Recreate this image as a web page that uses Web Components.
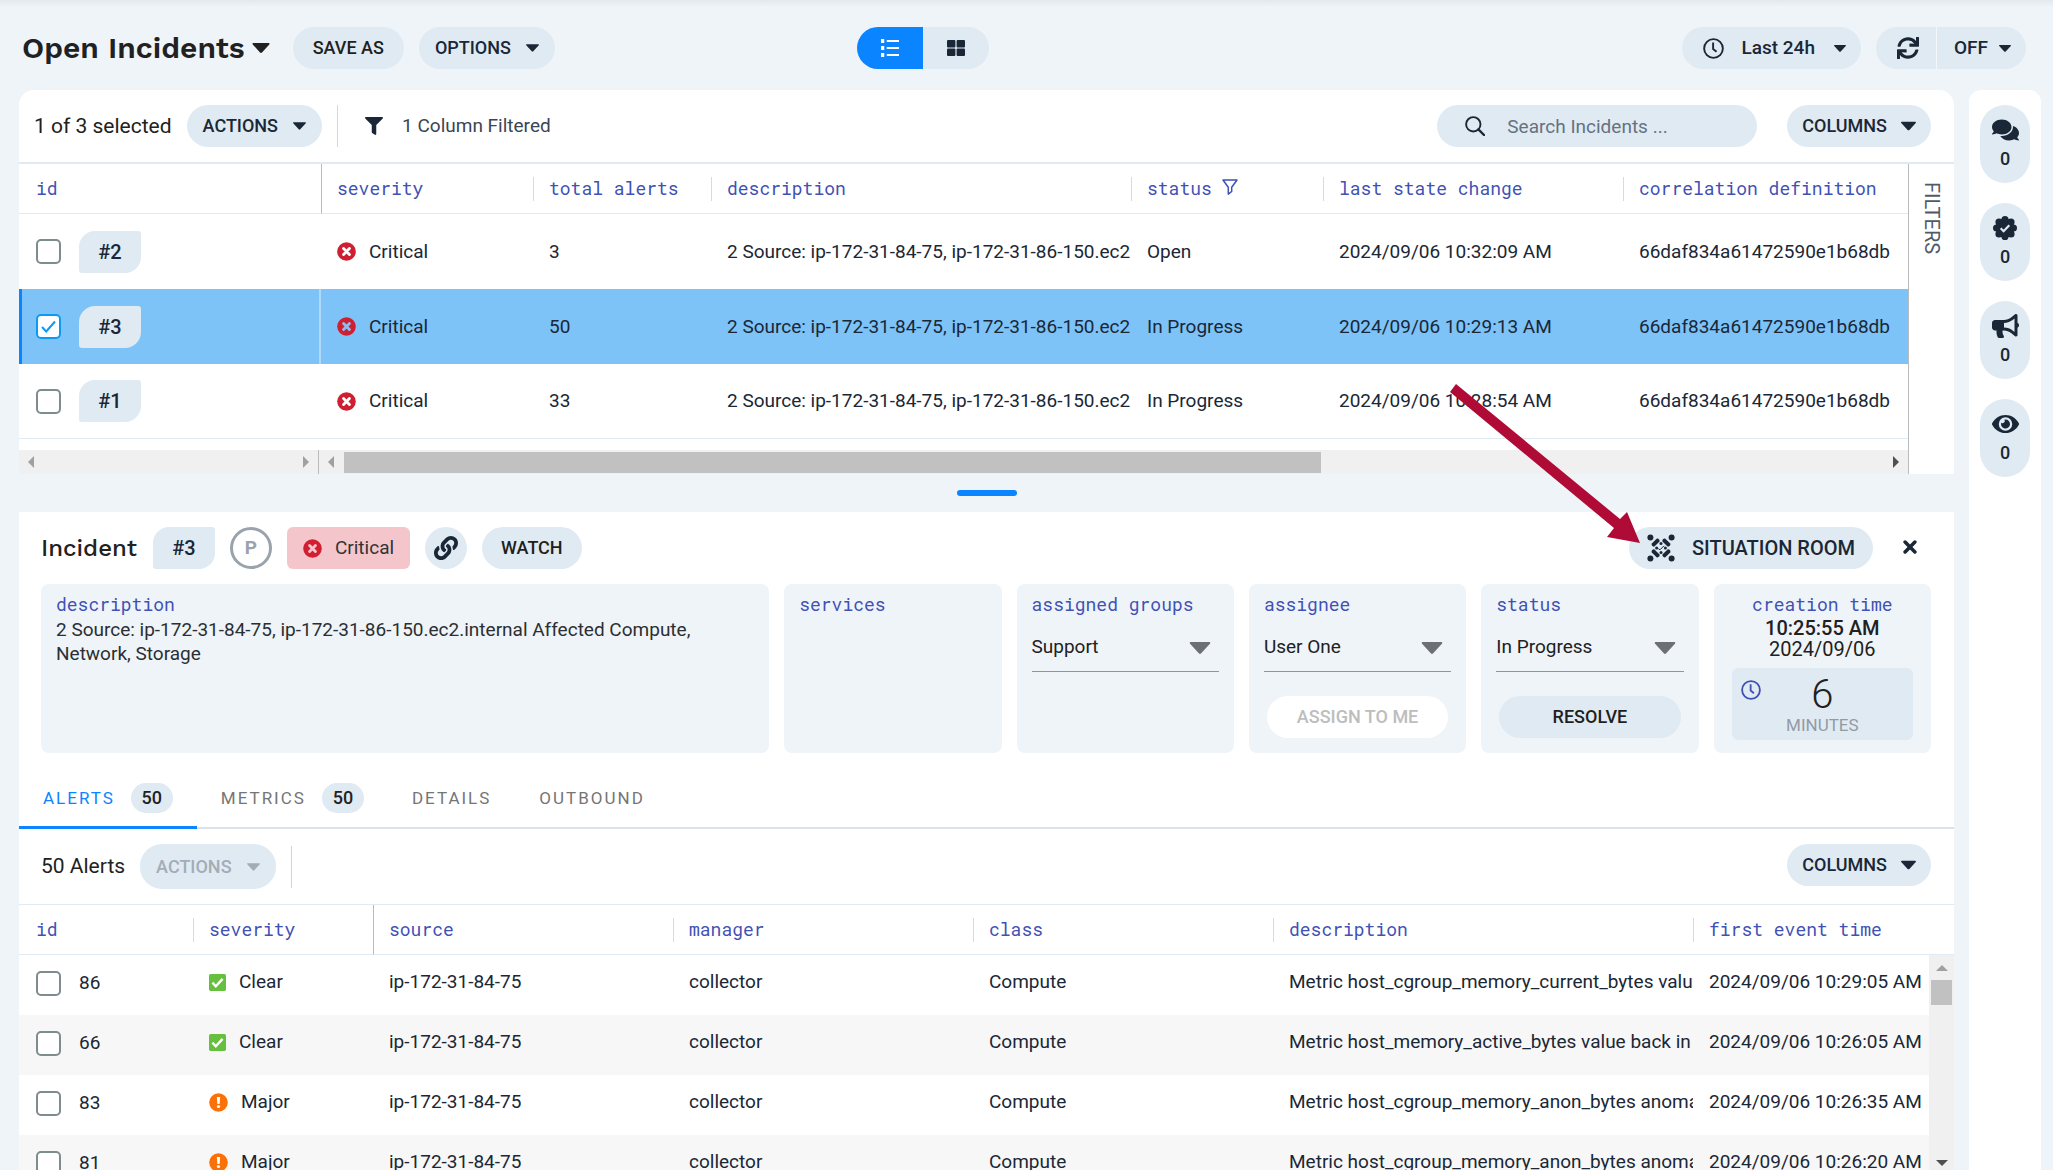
<!DOCTYPE html>
<html lang="en">
<head>
<meta charset="utf-8">
<title>Open Incidents</title>
<style>
  html, body { margin: 0; height: 100%; }
  body {
    --bg: #eff4f8; --pill: #e0eaf3; --ink: #1a2736; --text: #212121; --link: #3f51b5;
    --blue: #0a84ff; --line: #e0eaf3; --mono: "Roboto Mono", "Liberation Mono", monospace;
    --display: "Work Sans", Inter, sans-serif;
    background: var(--bg); color: var(--text); overflow: hidden;
    font: 400 19px/24px Roboto, sans-serif;
  }
</style>
</head>
<body>
<incident-app></incident-app>
<script>
const base = `*{box-sizing:border-box} button{font:inherit;color:inherit;border:0;background:none;padding:0;margin:0;cursor:pointer}`;
function define(name, css, html, ready) {
  customElements.define(name, class extends HTMLElement {
    connectedCallback() {
      if (this.shadowRoot) return;
      const root = this.attachShadow({ mode: "open" });
      root.innerHTML = `<style>${base}${css}</style>${typeof html === "function" ? html(this) : html}`;
      if (ready) ready(this, root);
    }
  });
}

const glyphs = {
  caret: ["0 0 12 7", '<path d="M.6 0h10.8c.5 0 .8.6.4 1L6.7 6.6a1 1 0 0 1-1.4 0L.2 1C-.2.6.1 0 .6 0z"/>'],
  filter: ["0 0 512 512", '<path d="M487.976 0H24.028C2.71 0-8.047 25.866 7.058 40.971L192 225.941V432c0 7.831 3.821 15.17 10.237 19.662l80 55.98C298.02 518.69 320 507.493 320 487.98V225.941l184.947-184.97C520.021 25.896 509.338 0 487.976 0z"/>'],
  funnel: ["0 0 16 16", '<path d="M1 1h14L9.700 8.200v4.300l-3.400 2.600V8.200z" fill="none" stroke="currentColor" stroke-width="1.500" stroke-linejoin="round"/>'],
  list: ["0 0 22 22", '<path d="M0 0h4v5H0zM0 8.500h4v5H0zM0 17h4v5H0zM7 1.200h15v2.400H7zM7 9.800h15v2.400H7zM7 18.300h15v2.400H7z"/>'],
  tiles: ["0 0 18 16", '<rect width="8.400" height="7.400" rx="1"/><rect x="9.600" width="8.400" height="7.400" rx="1"/><rect y="8.600" width="8.400" height="7.400" rx="1"/><rect x="9.600" y="8.600" width="8.400" height="7.400" rx="1"/>'],
  clock: ["0 0 22 22", '<circle cx="11" cy="11" r="9.800" fill="none" stroke="currentColor" stroke-width="2"/><path d="M10.600 4.800v6.700l3.600 3" fill="none" stroke="currentColor" stroke-width="2"/>'],
  search: ["0 0 20 20", '<circle cx="8.300" cy="8.300" r="7.200" fill="none" stroke="currentColor" stroke-width="1.900"/><path d="M13.400 13.400L19 19" fill="none" stroke="currentColor" stroke-width="2.400" stroke-linecap="round"/>'],
  sync: ["0 0 512 512", '<path d="M440.65 12.57l4 82.77A247.16 247.16 0 0 0 255.83 8C134.73 8 33.91 94.92 12.29 209.82A12 12 0 0 0 24.09 224h49.05a12 12 0 0 0 11.67-9.26 175.91 175.91 0 0 1 317-56.94l-101.46-4.86a12 12 0 0 0-12.57 12v47.41a12 12 0 0 0 12 12H500a12 12 0 0 0 12-12V12a12 12 0 0 0-12-12h-47.37a12 12 0 0 0-11.98 12.57zM255.83 432a175.61 175.61 0 0 1-146-77.8l101.8 4.87a12 12 0 0 0 12.57-12v-47.4a12 12 0 0 0-12-12H12a12 12 0 0 0-12 12V500a12 12 0 0 0 12 12h47.35a12 12 0 0 0 12-12.6l-4.15-82.57A247.17 247.17 0 0 0 255.83 504c121.11 0 221.93-86.92 243.55-201.82a12 12 0 0 0-11.8-14.18h-49.05a12 12 0 0 0-11.67 9.26A175.86 175.86 0 0 1 255.83 432z"/>'],
  comments: ["0 32 576 448", '<path d="M416 192c0-88.4-93.1-160-208-160S0 103.6 0 192c0 34.3 14.1 65.9 38 92-13.4 30.2-35.5 54.2-35.8 54.5-2.2 2.3-2.8 5.7-1.5 8.7S4.800 352 8 352c36.600 0 66.900-12.300 88.700-25 32.200 15.700 70.300 25 111.300 25 114.900 0 208-71.600 208-160zm122 220c23.900-26 38-57.700 38-92 0-66.900-53.500-124.200-129.300-148.100.9 6.600 1.300 13.300 1.300 20.100 0 105.900-107.700 192-240 192-10.800 0-21.300-.8-31.700-1.900C207.800 439.600 281.800 480 368 480c41 0 79.100-9.200 111.300-25 21.800 12.700 52.100 25 88.700 25 3.200 0 6.100-1.900 7.300-4.800 1.300-2.900.7-6.300-1.500-8.700-.3-.2-22.400-24.200-35.800-54.500z"/>'],
  badge: ["0 0 24 24", '<circle cx="12" cy="12" r="9.500"/><circle cx="12" cy="3.600" r="3.600"/><circle cx="12" cy="20.400" r="3.600"/><circle cx="3.600" cy="12" r="3.600"/><circle cx="20.400" cy="12" r="3.600"/><circle cx="6" cy="6" r="3.600"/><circle cx="18" cy="6" r="3.600"/><circle cx="6" cy="18" r="3.600"/><circle cx="18" cy="18" r="3.600"/><path d="M7.700 12.200l2.900 3 5.700-6" fill="none" stroke="#e0eaf3" stroke-width="2.200"/>'],
  horn: ["0 0 576 512", '<path d="M576 240c0-23.630-12.950-44.040-32-55.120V32.010C544 23.260 537.020 0 512 0c-7.120 0-14.190 2.380-19.980 7.020l-85.030 68.030C364.280 109.190 310.660 128 256 128H64c-35.350 0-64 28.650-64 64v96c0 35.350 28.650 64 64 64h33.700c-1.390 10.480-2.180 21.140-2.180 32 0 39.770 9.260 77.350 25.560 110.940 5.190 10.690 16.520 17.060 28.400 17.060h74.280c26.050 0 41.690-29.840 25.900-50.560-16.400-21.520-26.150-48.360-26.150-77.440 0-11.110 1.620-21.790 4.410-32H256c54.660 0 108.280 18.810 150.980 52.950l85.030 68.030a32.023 32.023 0 0 0 19.980 7.020c24.920 0 32-22.780 32-32V295.130C563.050 284.040 576 263.630 576 240zm-96 141.420l-33.050-26.440C392.950 311.780 325.120 288 256 288v-96c69.120 0 136.950-23.780 190.950-66.980L480 98.580v282.840z"/>'],
  eye: ["0 64 576 384", '<path d="M572.520 241.400C518.290 135.590 410.930 64 288 64S57.680 135.640 3.480 241.410a32.350 32.350 0 0 0 0 29.190C57.710 376.410 165.070 448 288 448s230.320-71.640 284.520-177.410a32.350 32.350 0 0 0 0-29.190zM288 400a144 144 0 1 1 144-144 143.930 143.930 0 0 1-144 144zm0-240a95.310 95.310 0 0 0-25.310 3.790 47.850 47.850 0 0 1-66.900 66.900A95.780 95.780 0 1 0 288 160z"/>'],
  link: ["0 0 512 512", '<path d="M326.612 185.391c59.747 59.809 58.927 155.698.36 214.590-.11.12-.24.25-.36.37l-67.200 67.200c-59.270 59.270-155.699 59.262-214.960 0-59.270-59.260-59.270-155.700 0-214.960l37.106-37.106c9.840-9.840 26.786-3.300 27.294 10.606.648 17.722 3.826 35.527 9.690 52.721 1.986 5.822.567 12.262-3.783 16.612l-13.087 13.087c-28.026 28.026-28.905 73.660-1.155 101.960 28.024 28.579 74.086 28.749 102.325.51l67.200-67.190c28.191-28.191 28.073-73.757 0-101.830-3.701-3.694-7.429-6.564-10.341-8.569a16.037 16.037 0 0 1-6.947-12.606c-.396-10.567 3.348-21.456 11.698-29.806l21.054-21.055c5.521-5.521 14.182-6.199 20.584-1.731a152.482 152.482 0 0 1 20.522 17.197zM467.547 44.449c-59.261-59.262-155.690-59.270-214.960 0l-67.200 67.200c-.12.12-.25.25-.36.37-58.566 58.892-59.387 154.781.36 214.590a152.454 152.454 0 0 0 20.521 17.196c6.402 4.468 15.064 3.789 20.584-1.731l21.054-21.055c8.350-8.350 12.094-19.239 11.698-29.806a16.037 16.037 0 0 0-6.947-12.606c-2.912-2.005-6.640-4.875-10.341-8.569-28.073-28.073-28.191-73.639 0-101.830l67.200-67.190c28.239-28.239 74.300-28.069 102.325.51 27.750 28.300 26.872 73.934-1.155 101.960l-13.087 13.087c-4.350 4.350-5.769 10.790-3.783 16.612 5.864 17.194 9.042 34.999 9.690 52.721.509 13.906 17.454 20.446 27.294 10.606l37.106-37.106c59.271-59.259 59.271-155.699.001-214.959z"/>'],
  room: ["0 0 28 28", '<g id="q"><circle cx="3.400" cy="3.400" r="3"/><path d="M4.800 9.600l4.800-4.800c1.500-.9 3.300.9 3 2.600L7.400 12.600c-1.700.5-3.500-1.500-2.600-3z"/><circle cx="14" cy="9.600" r="1.500"/></g><use href="#q" transform="rotate(90 14 14)"/><use href="#q" transform="rotate(180 14 14)"/><use href="#q" transform="rotate(270 14 14)"/><path d="M11.300 14.600l1.700 1.200 4-4" fill="none" stroke="currentColor" stroke-width="1"/>'],
  close: ["0 0 12 12", '<path d="M1.800 1.800l8.400 8.400M10.200 1.800l-8.400 8.400" fill="none" stroke="currentColor" stroke-width="3" stroke-linecap="round"/>'],
  critical: ["0 0 20 20", '<circle cx="10" cy="10" r="9.800" fill="#cf1f30"/><path d="M6.900 6.900l6.200 6.200M13.100 6.900l-6.200 6.200" stroke="var(--cut,#fff)" stroke-width="3" stroke-linecap="round"/>'],
  clear: ["0 0 20 20", '<rect width="20" height="20" rx="2" fill="#67bf3e"/><path d="M4 10.200l4 4.200 8-8.600" fill="none" stroke="#fff" stroke-width="2.800"/>'],
  major: ["0 0 20 20", '<circle cx="10" cy="10" r="9.800" fill="#fb7109"/><path d="M8.300 4.300h3.400l-.5 7.200H8.800z" fill="#fff"/><circle cx="10" cy="14.200" r="1.700" fill="#fff"/>'],
  left: ["0 0 6 12", '<path d="M6 0v12L0 6z"/>'], right: ["0 0 6 12", '<path d="M0 0v12l6-6z"/>'],
  up: ["0 0 12 6", '<path d="M0 6h12L6 0z"/>'], down: ["0 0 12 6", '<path d="M0 0h12L6 6z"/>']
};
define("app-icon", `:host{display:inline-flex;flex:none} svg{display:block;fill:currentColor}`, el => {
  const [box, body] = glyphs[el.getAttribute("name")];
  return `<svg viewBox="${box}" width="${el.getAttribute("w")}" height="${el.getAttribute("h") || el.getAttribute("w")}" aria-hidden="true">${body}</svg>`;
});

/* Rounded action button; the caret attribute adds a drop-down mark. */
define("pill-button", `
  :host{display:inline-flex;flex:none}
  button{display:flex;align-items:center;justify-content:center;height:42px;width:100%;border-radius:21px;background:var(--pill-bg,var(--pill));color:var(--pill-ink,var(--ink));padding:0 var(--pad,16px);font-size:18px;font-weight:500;white-space:nowrap}
  :host([tall]) button{height:45px;border-radius:22px}
  :host([round]) button{width:42px;padding:0}
  app-icon.c{margin-left:15px}
  :host([caret="15"]) app-icon.c{margin-left:14px}
  button:disabled{cursor:default}`,
  el => `<button ${el.hasAttribute("off") ? "disabled" : ""} ${el.hasAttribute("label") ? `aria-label="${el.getAttribute("label")}"` : ""}><slot></slot>${el.hasAttribute("caret") ? `<app-icon class="c" name="caret" w="${el.getAttribute("caret") || 13}" h="${el.getAttribute("caret") ? 10 : 8}"></app-icon>` : ""}</button>`);

define("id-tag", `
  :host{display:inline-flex;flex:none;align-items:center;justify-content:center;width:62px;height:42px;background:var(--pill);color:var(--ink);border-radius:16px 3px 16px 3px;font-size:20px;font-weight:500}`,
  `<slot></slot>`);

define("severity-label", `
  :host{display:inline-flex;align-items:center;gap:13px;vertical-align:middle}`,
  el => { const s = el.getAttribute("level"); return `<app-icon name="${s}" w="${s === "clear" ? 17 : 19}"></app-icon><slot></slot>`; });

/* Table of incidents or alerts, filled from the data registered under its "source" name. */
const clip = "2 Source: ip-172-31-84-75, ip-172-31-86-150.ec2";
const hash = "66daf834a61472590e1b68db";
const sources = {
  incidents: {
    cols: [["id", 302], ["severity", 212], ["total alerts", 178], ["description", 420], ["status", 192, "funnel"], ["last state change", 300], ["correlation definition", 0]],
    pin: 1,
    rows: [
      ["#2", "critical", "3", clip, "Open", "2024/09/06 10:32:09 AM", hash],
      ["#3", "critical", "50", clip, "In Progress", "2024/09/06 10:29:13 AM", hash],
      ["#1", "critical", "33", clip, "In Progress", "2024/09/06 10:28:54 AM", hash]]
  },
  alerts: {
    cols: [["id", 174], ["severity", 180], ["source", 300], ["manager", 300], ["class", 300], ["description", 420], ["first event time", 0]],
    pin: 2,
    rows: [
      ["86", "clear", "ip-172-31-84-75", "collector", "Compute", "Metric host_cgroup_memory_current_bytes value", "2024/09/06 10:29:05 AM"],
      ["66", "clear", "ip-172-31-84-75", "collector", "Compute", "Metric host_memory_active_bytes value back in", "2024/09/06 10:26:05 AM"],
      ["83", "major", "ip-172-31-84-75", "collector", "Compute", "Metric host_cgroup_memory_anon_bytes anomaly", "2024/09/06 10:26:35 AM"],
      ["81", "major", "ip-172-31-84-75", "collector", "Compute", "Metric host_cgroup_memory_anon_bytes anomaly", "2024/09/06 10:26:20 AM"]]
  }
};
const cap = s => s[0].toUpperCase() + s.slice(1);
define("data-grid", `
  :host{display:block}
  table{width:100%;table-layout:fixed;border-collapse:separate;border-spacing:0;color:var(--ink)}
  th,td{padding:0 0 0 16px;text-align:left;white-space:nowrap;overflow:hidden}
  th{height:50px;padding-bottom:2px;font:400 18px/24px var(--mono);color:var(--link);border-bottom:1px solid var(--line);background:linear-gradient(#d5dbe0,#d5dbe0) no-repeat 0 50%/1px 24px}
  th:first-child{background:none} th:first-child,td:first-child{padding-left:17px}
  th.pin{border-left:1px solid #b9bcbf;background:none;padding-left:15px}
  th app-icon{margin-left:10px}
  .first{display:flex;align-items:center;gap:18px}
  input{appearance:none;flex:none;width:25px;height:25px;margin:0;border:2px solid #7f8c8d;border-radius:5px;background:#fff}
  input:checked{border-color:#0a9bf5;background:#fff url('data:image/svg+xml,<svg xmlns="http://www.w3.org/2000/svg" viewBox="0 0 21 21"><path d="M4 11l4.200 4.500L17 5.500" fill="none" stroke="%230a9bf5" stroke-width="2"/></svg>') center/21px}
  .incidents td{height:75px}
  .incidents tr:last-child td{border-bottom:1px solid var(--line)}
  .incidents tr.on td{background:#7dc3f8;--cut:#7dc3f8}
  .incidents tr.on td:first-child{border-left:3px solid var(--blue);padding-left:14px;border-right:2px solid #b0d8fa}
  .alerts td{height:60px;padding-bottom:6px}
  .alerts .first{padding-top:2px}
  .alerts tr:nth-child(even) td{background:#f7f7f7}`,
  el => {
    const name = el.getAttribute("source"), d = sources[name];
    const cell = (v, i) => {
      if (i === 0) return name === "incidents" ? `<id-tag>${v}</id-tag>` : `<span>${v}</span>`;
      if (i === 1) return `<severity-label level="${v}">${cap(v)}</severity-label>`;
      return v;
    };
    return `<table class="${name}"><colgroup>${d.cols.map(c => `<col${c[1] ? ` style="width:${c[1]}px"` : ""}>`).join("")}</colgroup>
      <thead><tr>${d.cols.map((c, i) => `<th scope="col" class="${i === d.pin ? "pin" : ""}">${c[0]}${c[2] ? `<app-icon name="${c[2]}" w="16"></app-icon>` : ""}</th>`).join("")}</tr></thead>
      <tbody>${d.rows.map(r => `<tr class="${r[0] === "#3" ? "on" : ""}">${r.map((v, i) => `<td>${i ? cell(v, i) : `<div class="first"><input type="checkbox" aria-label="Select ${v}" ${v === "#3" ? "checked" : ""}>${cell(v, 0)}</div>`}</td>`).join("")}</tr>`).join("")}</tbody></table>`;
  });

define("h-scroll", `
  :host{display:flex;height:24px;margin-top:11px;background:#f0f0f0;color:#a0a0a0}
  .a{flex:none;width:300px;display:flex;align-items:center;justify-content:space-between;padding:0 9px;border-right:1px solid #b9bcbf}
  .b{flex:1;display:flex;align-items:center;padding:0 9px;gap:10px}
  .t{flex:1;height:21px;display:flex} .t i{width:63.5%;background:#c1c1c1}
  .e{color:#505050}`,
  `<div class="a"><app-icon name="left" w="6" h="12"></app-icon><app-icon name="right" w="6" h="12"></app-icon></div>
   <div class="b"><app-icon name="left" w="6" h="12"></app-icon><div class="t"><i></i></div><app-icon class="e" name="right" w="6" h="12"></app-icon></div>`);

define("v-scroll", `
  :host{display:flex;flex-direction:column;align-items:center;justify-content:space-between;width:25px;background:#f0f0f0;color:#a0a0a0;padding:10px 0 4px}
  div{display:flex;flex-direction:column;align-items:center;gap:9px} i{width:21px;height:25px;background:#c1c1c1} .e{color:#505050}`,
  `<div><app-icon name="up" w="12" h="6"></app-icon><i></i></div><app-icon class="e" name="down" w="12" h="6"></app-icon>`);

define("top-bar", `
  :host{display:flex;align-items:center;height:90px;padding:6px 27px 0 22px;background:linear-gradient(#e3e8ec,var(--bg) 7px)}
  .side{flex:1;display:flex;align-items:center;gap:15px} .end{justify-content:flex-end}
  h1{margin:0 8px 0 0;font:600 30px/36px var(--display)}
  h1 button{display:flex;align-items:center;gap:7px}
  .view{display:flex;height:42px;border-radius:21px;overflow:hidden;background:var(--pill);color:var(--ink);margin-right:202px}
  .view button{width:66px;display:flex;align-items:center;justify-content:center}
  .view .on{background:var(--blue);color:#fff}
  .group{display:flex;align-items:center;height:42px;border-radius:21px;background:var(--pill);color:var(--ink);font-size:19px;font-weight:500}
  .group button{display:flex;align-items:center;height:42px}
  .time{gap:17px;padding:0 15px 0 21px} .time app-icon:last-child{margin-left:2px}
  .sync{padding:0 17px 0 21px;border-right:1px solid #f5f8fb} .off{padding:0 15px 0 17px;gap:11px}
  .dark{--ink:#1f1f1f}`,
  `<div class="side"><h1><button>Open Incidents<app-icon name="caret" w="18" h="10"></app-icon></button></h1>
     <pill-button class="dark" style="--pad:20px">SAVE AS</pill-button><pill-button caret>OPTIONS</pill-button></div>
   <div class="view"><button class="on" aria-label="List view"><app-icon name="list" w="22" h="18"></app-icon></button><button aria-label="Tile view"><app-icon name="tiles" w="18" h="16"></app-icon></button></div>
   <div class="side end"><div class="group"><button class="time"><app-icon name="clock" w="21"></app-icon>Last 24h<app-icon name="caret" w="12" h="7"></app-icon></button></div>
     <div class="group"><button class="sync" aria-label="Refresh"><app-icon name="sync" w="22"></app-icon></button><button class="off">OFF<app-icon name="caret" w="12" h="7"></app-icon></button></div></div>`);

define("incidents-panel", `
  :host{display:block;background:#fff;border-radius:15px 15px 0 0}
  .bar{display:flex;align-items:center;height:74px;border-bottom:2px solid var(--line);padding:0 23px 0 15px}
  .bar>span{margin-right:15px;font-size:21px}
  .note{display:flex;align-items:center;gap:19px;height:42px;margin-left:15px;padding-left:27px;border-left:1px solid #d0d9e1;color:#3a4656}
  .note app-icon{color:var(--ink)}
  .search{display:flex;align-items:center;gap:22px;margin:0 30px 0 auto;width:320px;height:42px;border-radius:21px;background:var(--pill);padding:0 28px;color:var(--ink)}
  .search input{flex:1;min-width:0;border:0;outline:0;background:none;font:inherit;padding:2px 0 0;color:inherit}
  .search input::placeholder{color:#667280;opacity:1}
  .body{display:flex}.main{flex:1;min-width:0}
  .filters{flex:none;width:46px;border-left:1px solid #b9bcbf;display:flex;justify-content:center;align-items:flex-start;padding-top:18px;color:#4f5b6b}
  .filters button{writing-mode:vertical-rl;font-size:20px}`,
  `<div class="bar"><span>1 of 3 selected</span><pill-button caret>ACTIONS</pill-button>
     <div class="note"><app-icon name="filter" w="18"></app-icon>1 Column Filtered</div>
     <label class="search"><app-icon name="search" w="20"></app-icon><input type="text" placeholder="Search Incidents ..." aria-label="Search Incidents"></label>
     <pill-button caret="15" style="--pad:15px">COLUMNS</pill-button></div>
   <div class="body"><div class="main"><data-grid source="incidents"></data-grid><h-scroll></h-scroll></div><div class="filters"><button>FILTERS</button></div></div>`);

define("detail-card", `
  :host{display:flex;flex-direction:column;height:169px;border-radius:8px;background:var(--bg);padding:8px 15px 0}
  .l{font:400 18px/24px var(--mono);color:var(--link)}
  :host([center]) .l{text-align:center}`,
  el => `<div class="l">${el.getAttribute("label")}</div><slot></slot>`);

define("line-select", `
  :host{display:block}
  label{display:flex;align-items:center;height:50px;margin-top:6px;border-bottom:1px solid #8f979d;position:relative}
  select{appearance:none;width:100%;border:0;background:none;font:inherit;font-size:19px;color:var(--text);padding:0 36px 0 0;outline:0}
  app-icon{position:absolute;right:8px;top:20px;color:#6c7072;pointer-events:none}`,
  el => `<label><select aria-label="${el.getAttribute("label")}"><option>${el.getAttribute("value")}</option></select><app-icon name="caret" w="22" h="12"></app-icon></label>`);

define("incident-detail", `
  :host{display:flex;flex-direction:column;min-height:0;background:#fff}
  header{display:flex;align-items:center;gap:15px;height:72px;padding:0 37px 0 22px}
  h2{margin:0 1px 0 0;font:500 24px/30px var(--display)}
  .p{width:42px;height:42px;border:3px solid #9aa3ac;border-radius:50%;display:flex;align-items:center;justify-content:center;color:#9aa3ac;font-weight:700}
  .sev{height:42px;padding:0 16px;border-radius:6px;background:#f4c6cb;display:flex;align-items:center;--cut:#f4c6cb;color:#333}
  .room{margin-left:auto;--pad:18px} .room app-icon{margin-right:17px} .big{font-size:20px}
  .x{margin-left:15px;color:var(--ink)}
  .cards{display:grid;grid-template-columns:67fr repeat(5,20fr);gap:15px;padding:0 23px 0 22px}
  p{margin:2px 0 0;color:#2b2f33}
  .act{margin:24px 3px 0}
  .when{display:flex;flex-direction:column;text-align:center;font-size:20px;line-height:21px;padding-top:2px}
  .when b{font-weight:500}
  .age{position:relative;margin:8px 3px 0;height:72px;border-radius:6px;background:var(--pill);display:flex;flex-direction:column}
  .age app-icon{position:absolute;left:9px;top:12px;color:var(--link)}
  .age strong{font:300 40px/54px Roboto,sans-serif} .age small{margin-top:-3px;font-size:17px;line-height:12px;color:#929ba4}
  nav{display:flex;height:76px;border-bottom:2px solid #d9e2ea}
  nav button{display:flex;align-items:center;gap:16px;height:76px;padding:16px 24px 0;font-size:17px;letter-spacing:2px;color:#757575;border-bottom:3px solid transparent}
  nav .on{color:var(--blue);border-color:var(--blue)}
  nav span{display:flex;align-items:center;justify-content:center;width:42px;height:30px;border-radius:15px;background:var(--pill);color:#222;font-size:18px;letter-spacing:normal;font-weight:500}
  .bar{display:flex;align-items:flex-start;height:76px;flex:none;border-bottom:1px solid var(--line);padding:15px 23px 0 22px}
  .bar>span{margin-right:15px;font-size:21px;line-height:45px} .bar i{width:1px;height:42px;margin:2px 0 0 15px;background:#ccd6df}
  .bar .end{margin-left:auto}
  .list{flex:1;min-height:0;display:grid;grid-template:50px 1fr/1fr 25px;overflow:hidden}
  data-grid{grid-area:1/1/3/2} .list hr{grid-area:1/2;margin:0;border:0;border-bottom:1px solid var(--line)} v-scroll{grid-area:2/2}
  .dark{--ink:#1f1f1f} .faded{--pill-ink:#a3adb7}`,
  `<header><h2>Incident</h2><id-tag>#3</id-tag><div class="p">P</div><div class="sev"><severity-label level="critical">Critical</severity-label></div>
     <pill-button round label="Copy link"><app-icon name="link" w="24"></app-icon></pill-button><pill-button class="dark" style="--pad:19px">WATCH</pill-button>
     <pill-button class="room"><app-icon name="room" w="28"></app-icon><span class="big">SITUATION ROOM</span></pill-button>
     <button class="x" aria-label="Close"><app-icon name="close" w="14"></app-icon></button></header>
   <div class="cards">
     <detail-card label="description"><p>2 Source: ip-172-31-84-75, ip-172-31-86-150.ec2.internal Affected Compute, Network, Storage</p></detail-card>
     <detail-card label="services"></detail-card>
     <detail-card label="assigned groups"><line-select label="assigned groups" value="Support"></line-select></detail-card>
     <detail-card label="assignee"><line-select label="assignee" value="User One"></line-select><pill-button class="act" off style="--pill-bg:#fff;--pill-ink:#bdbdbd">ASSIGN TO ME</pill-button></detail-card>
     <detail-card label="status"><line-select label="status" value="In Progress"></line-select><pill-button class="act dark">RESOLVE</pill-button></detail-card>
     <detail-card label="creation time" center><div class="when"><b>10:25:55 AM</b><span>2024/09/06</span><div class="age"><app-icon name="clock" w="20"></app-icon><strong>6</strong><small>MINUTES</small></div></div></detail-card>
   </div>
   <nav role="tablist"><button class="on" role="tab">ALERTS<span>50</span></button><button role="tab">METRICS<span>50</span></button><button role="tab">DETAILS</button><button role="tab">OUTBOUND</button></nav>
   <div class="bar"><span>50 Alerts</span><pill-button class="faded" caret tall off>ACTIONS</pill-button><i></i><pill-button class="end" caret="15" style="--pad:15px">COLUMNS</pill-button></div>
   <div class="list"><data-grid source="alerts"></data-grid><hr><v-scroll></v-scroll></div>`);

define("side-rail", `
  :host{display:flex;flex-direction:column;align-items:center;gap:20px;width:72px;background:#fff;border-radius:12px 12px 0 0;padding-top:15px}
  button{width:50px;height:78px;border-radius:25px;background:var(--pill);color:var(--ink);display:flex;flex-direction:column;align-items:center;font-size:18px;font-weight:500;padding-top:10px}
  button span{display:flex;height:29px;align-items:center;justify-content:center;margin-bottom:3px}`,
  ["comments,27,22,Comments", "badge,24,24,Verified", "horn,27,24,Announcements", "eye,27,18,Watchers"].map(s => {
    const [n, w, h, l] = s.split(",");
    return `<button aria-label="${l}"><span><app-icon name="${n}" w="${w}" h="${h}"></app-icon></span>0</button>`;
  }).join(""));

define("callout-arrow", `:host{position:absolute;left:1450px;top:384px;pointer-events:none} svg{display:block}`,
  `<svg width="192" height="160" viewBox="0 0 192 160"><path d="M6 0l164 135 7-7 13 31-33-6 7-9L0 8z" fill="#b00b36"/></svg>`);

define("incident-app", `
  :host{display:flex;flex-direction:column;height:100vh;position:relative}
  .row{flex:1;min-height:0;display:flex;gap:15px;padding:0 12px 0 19px}
  main{flex:1;min-width:0;display:flex;flex-direction:column}
  .grip{flex:none;height:38px;display:flex;justify-content:center;padding-top:16px}
  .grip i{width:60px;height:6px;border-radius:3px;background:var(--blue)}
  incident-detail{flex:1}`,
  `<top-bar></top-bar><div class="row"><main><incidents-panel></incidents-panel><div class="grip"><i></i></div><incident-detail></incident-detail></main><side-rail></side-rail></div><callout-arrow></callout-arrow>`);
</script>
</body>
</html>
